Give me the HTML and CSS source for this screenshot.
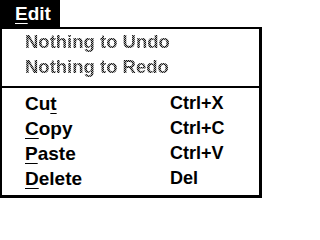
FILE: index.html
```html
<!DOCTYPE html>
<html>
<head>
<meta charset="utf-8">
<link rel="stylesheet" href="styles.css">
</head>
<body>
<div class="tab"><span class="tab-label"><u>E</u>dit</span></div>
<div class="menu">
  <div class="row disabled"><span class="label dim">Nothing to Undo</span></div>
  <div class="row disabled"><span class="label dim">Nothing to Redo</span></div>
  <div class="sep"></div>
  <div class="row"><span class="label">Cu<u>t</u></span><span class="key">Ctrl+X</span></div>
  <div class="row"><span class="label"><u>C</u>opy</span><span class="key">Ctrl+C</span></div>
  <div class="row"><span class="label"><u>P</u>aste</span><span class="key">Ctrl+V</span></div>
  <div class="row"><span class="label"><u>D</u>elete</span><span class="key">Del</span></div>
</div>
</body>
</html>
```
FILE: styles.css
```css
html, body {
  margin: 0;
  padding: 0;
  background: #fff;
}
body {
  font-family: "Liberation Sans", Arial, sans-serif;
  font-weight: bold;
  font-size: 18px;
  color: #000;
}
u {
  text-decoration: underline;
  text-decoration-thickness: 1px;
  text-underline-offset: 3px;
}
.tab {
  width: 60px;
  height: 27px;
  background: #000;
  color: #fff;
  box-sizing: border-box;
  padding-left: 15px;
  line-height: 27px;
  font-size: 19px;
}
.menu {
  width: 262px;
  box-sizing: border-box;
  border-style: solid;
  border-color: #000;
  border-width: 2px 3px 3px 2px;
  padding: 0 0 4px 23px;
}
.row {
  display: grid;
  grid-template-columns: 145px 1fr;
  height: 25px;
  line-height: 25px;
  white-space: nowrap;
}
.label {
  font-size: 19px;
}
.key {
  font-size: 18px;
}
.dim {
  grid-column: 1 / -1;
  justify-self: start;
  font-size: 18.5px;
  color: transparent;
  background: repeating-conic-gradient(#111 0 25%, #aaa 0 50%) 0 0 / 2px 2px;
  -webkit-background-clip: text;
  background-clip: text;
}
.sep {
  height: 2px;
  background: #000;
  margin: 7px -3px 3px -23px;
}
```
